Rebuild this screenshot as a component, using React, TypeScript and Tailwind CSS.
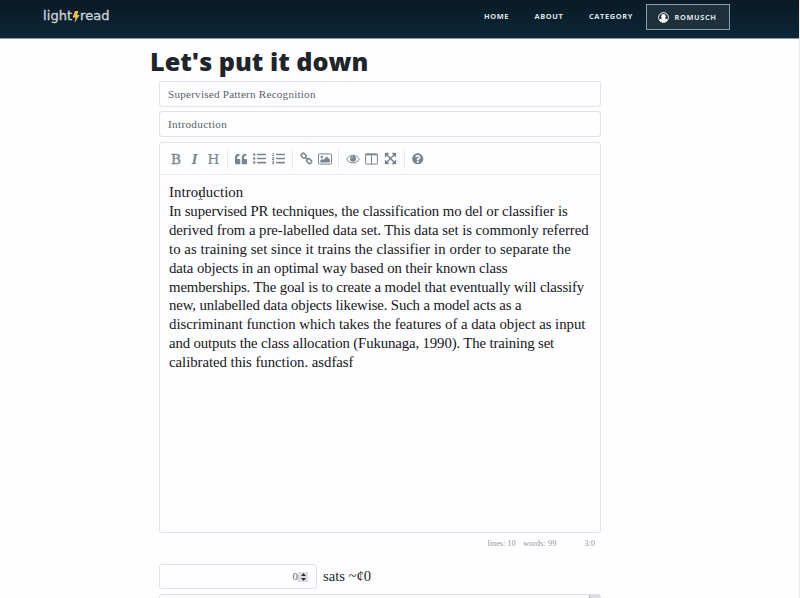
import React from "react";
import { FaQuoteLeft, FaListUl, FaListOl, FaExpandArrowsAlt, FaQuestionCircle } from "react-icons/fa";

const lines: { text: string; spacing: string }[] = [
  { text: "Introduction", spacing: "tracking-[0.1px]" },
  { text: "In supervised PR techniques, the classification mo del or classifier is", spacing: "tracking-[-0.11px]" },
  { text: "derived from a pre-labelled data set. This data set is commonly referred", spacing: "tracking-[-0.046px]" },
  { text: "to as training set since it trains the classifier in order to separate the", spacing: "tracking-[0.05px]" },
  { text: "data objects in an optimal way based on their known class", spacing: "tracking-[-0.09px]" },
  { text: "memberships. The goal is to create a model that eventually will classify", spacing: "tracking-[-0.12px]" },
  { text: "new, unlabelled data objects likewise. Such a model acts as a", spacing: "tracking-[-0.135px]" },
  { text: "discriminant function which takes the features of a data object as input", spacing: "tracking-[-0.02px]" },
  { text: "and outputs the class allocation (Fukunaga, 1990). The training set", spacing: "tracking-[-0.13px]" },
  { text: "calibrated this function. asdfasf", spacing: "tracking-[-0.04px]" },
];

function Tool({ children }: { children: React.ReactNode }) {
  return <span className="flex h-[19px] w-[19px] items-center justify-center">{children}</span>;
}

function Divider() {
  return <span className="mx-[3.7px] h-5 w-px bg-[#eaebed]" />;
}

function LinkIcon() {
  return (
    <svg width="13" height="13" viewBox="0 0 13 13" fill="none" stroke="currentColor" strokeWidth="1.5">
      <rect x="-2.5" y="-1.9" width="5" height="3.8" rx="1.6" transform="translate(3.7 3.7) rotate(45)" />
      <rect x="-2.5" y="-1.9" width="5" height="3.8" rx="1.6" transform="translate(9.2 9.2) rotate(45)" />
      <path d="M5 5l3 3" />
    </svg>
  );
}

function ImageIcon() {
  return (
    <svg width="14" height="12" viewBox="0 0 14 12" fill="currentColor">
      <rect x=".5" y=".9" width="13" height="10.2" rx=".8" fill="none" stroke="currentColor" />
      <circle cx="3.8" cy="4" r="1.2" />
      <path d="M2.2 9.6V7.8l2-2 1.2 1.2 3.4-3.5 3 3v3.1z" />
    </svg>
  );
}

function EyeIcon() {
  return (
    <svg width="14" height="12" viewBox="0 0 14 12" fill="none" stroke="currentColor">
      <path d="M.6 6.2C2.2 3.7 4.4 2.3 7 2.3s4.8 1.4 6.4 3.9C11.8 8.5 9.6 9.9 7 9.9S2.2 8.5.6 6.2z" />
      <circle cx="7" cy="5.7" r="3" fill="currentColor" stroke="none" />
      <path d="M5.600 5.400c0-.9.600-1.500 1.500-1.500" stroke="#fff" strokeWidth=".6" />
    </svg>
  );
}

function ColumnsIcon() {
  return (
    <svg width="13" height="12" viewBox="0 0 13 12" fill="none" stroke="currentColor">
      <rect x=".6" y=".9" width="11.800" height="10.200" rx=".7" />
      <path d="M.6 1.600h11.800" strokeWidth="1.400" />
      <path d="M6.500 1v10" />
    </svg>
  );
}

function UserIcon() {
  return (
    <svg width="11" height="11" viewBox="0 0 11 11">
      <circle cx="5.5" cy="5.5" r="4.9" fill="none" stroke="#f4f7f8" />
      <circle cx="5.5" cy="4.4" r="2.3" fill="#fff" />
      <path d="M1.500 8.200c.6-1.300 2-1.900 4-1.900s3.400.6 4 1.900c-.9 1.300-2.300 2.100-4 2.100s-3.100-.8-4-2.100z" fill="#fff" />
    </svg>
  );
}

export default function App() {
  return (
    <div className="flex h-[598px] w-[800px] flex-col overflow-hidden border-r border-[#e9e9ed] bg-[#fefdff] font-['Liberation_Serif',serif] text-[#212529]">
      <header className="flex h-[39px] shrink-0 items-start border-b border-[#8b949b] bg-linear-to-b from-[#0b1a26] to-[#0a2637] pl-[43px] font-['Open_Sans',sans-serif]">
        <a className="mt-[7px] flex h-[18px] w-[67px] items-center font-['DejaVu_Sans',sans-serif] text-[13px] leading-[18px] text-[#ccd2d7] [-webkit-text-stroke:0.35px]">
          <span className="w-[29px] tracking-[0.1px]">light</span>
          <svg className="mt-[2px] w-[8px] shrink-0" height="12" viewBox="0 0 8 13" fill="#edc156">
            <path d="M3 0h3.600L5.300 4.300h2.600L2.300 13l1.200-6H.3z" />
          </svg>
          <span className="tracking-[0.1px]">read</span>
        </a>
        <nav className="ml-[374px] flex items-start text-[7.4px] font-bold leading-[10px] tracking-[0.62px] text-[#dde2e6]">
          <a className="mt-[11px] w-[50.500px]">HOME</a>
          <a className="mt-[11px] w-[54.500px]">ABOUT</a>
          <a className="mt-[11px] w-[57px]">CATEGORY</a>
          <a className="mt-[4px] flex h-[26px] w-[84px] items-center border border-[#8f9fac] bg-[#1d303c] pl-[11px]">
            <UserIcon />
            <span className="ml-[5.500px] -mt-px">ROMUSCH</span>
          </a>
        </nav>
      </header>

      <main className="ml-[151px] flex w-[450px] flex-col">
        <h1 className="-ml-px mt-[6px] h-[36px] whitespace-nowrap font-['Open_Sans',sans-serif] text-[25.200px] font-extrabold leading-[32px]">Let's put it down</h1>
        <div className="ml-[8px] flex w-[442px] flex-col">
          <div className="flex h-[26px] items-center rounded-[3px] border border-[#e2e2e6] pl-[8px] text-[11.200px] tracking-[0.2px] text-[#5b6268]">Supervised Pattern Recognition</div>
          <div className="mt-[4px] flex h-[26px] items-center rounded-[3px] border border-[#e2e2e6] pl-[8px] text-[11.200px] tracking-[0.32px] text-[#5b6268]">Introduction</div>
          <section className="mt-[5px] h-[391px] rounded-[3px] border border-[#e2e2e6]">
            <div className="flex h-[32px] items-center border-b border-[#e9e9ed] pl-[6px] text-[#7b848e]">
              <Tool><span className="ml-px font-['DejaVu_Serif',serif] text-[13.5px] leading-[18px] [-webkit-text-stroke:0.4px]">B</span></Tool>
              <Tool><i className="text-[15.500px] font-bold">I</i></Tool>
              <Tool><span className="font-['DejaVu_Serif',serif] text-[13.5px] leading-[18px] [-webkit-text-stroke:0.2px]">H</span></Tool>
              <Divider />
              <Tool><FaQuoteLeft size={12} /></Tool>
              <Tool><FaListUl size={13} /></Tool>
              <Tool><FaListOl size={13} /></Tool>
              <Divider />
              <Tool><LinkIcon /></Tool>
              <Tool><ImageIcon /></Tool>
              <Divider />
              <Tool><EyeIcon /></Tool>
              <Tool><ColumnsIcon /></Tool>
              <Tool><FaExpandArrowsAlt size={13} /></Tool>
              <Divider />
              <Tool><FaQuestionCircle size={11.500} /></Tool>
            </div>
            <div className="relative pl-[9px] pt-[8px] text-[14.800px] leading-[18.900px] text-[#15171a]">
              {lines.map((line) => (
                <p key={line.text} className="whitespace-nowrap"><span className={line.spacing}>{line.text}</span></p>
              ))}
              <svg className="absolute left-[38px] top-[15px]" width="5" height="10" viewBox="0 0 5 10" fill="none" stroke="#50545a" strokeWidth=".8">
                <path d="M.5.5h1.500l.5.500.5-.5h1.500M2.500 1v8M.5 9.500h1.500l.5-.5.5.500h1.500" />
              </svg>
            </div>
          </section>
          <div className="flex h-[31px] justify-end pr-[6px] pt-[5px] text-[8.2px] leading-[12px] text-[#939599]">
            <span className="w-[35.5px]">lines: 10</span>
            <span className="w-[61.500px] tracking-[0.1px]">words: 99</span>
            <span>3:0</span>
          </div>
          <div className="flex items-center">
            <div className="flex h-[25px] w-[158px] items-center justify-end rounded-[3px] border border-[#e2e2e6] pr-[8px] text-[11px] text-[#5b6268]">
              <span>0</span>
              <span className="flex h-[10px] w-[10px] flex-col items-center justify-center gap-[2px] bg-[#dddddf]">
                <svg width="5" height="3" viewBox="0 0 5 3"><path d="M2.500 0L5 3H0z" fill="#303236" /></svg>
                <svg width="5" height="3" viewBox="0 0 5 3"><path d="M2.500 3L5 0H0z" fill="#303236" /></svg>
              </span>
            </div>
            <span className="-mt-px ml-[6px] text-[14.6px] leading-[20px]">sats ~¢0</span>
          </div>
          <div className="mt-[5px] flex h-[30px] justify-end rounded-[3px] border border-[#dedee2]">
            <span className="h-full w-[11px] border-l border-[#b9b9bd] bg-[#dcdcdf]" />
          </div>
        </div>
      </main>
    </div>
  );
}
